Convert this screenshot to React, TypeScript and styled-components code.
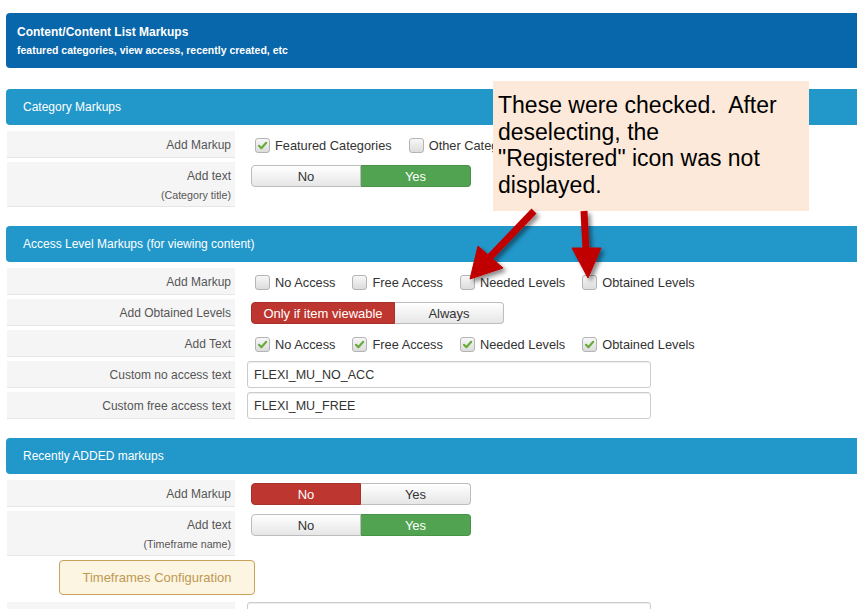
import styled, { createGlobalStyle } from "styled-components";

const GlobalStyle = createGlobalStyle`
  html, body {
    margin: 0;
    padding: 0;
    background: #fff;
    overflow: hidden;
  }
  body {
    font-family: "Liberation Sans", Arial, sans-serif;
  }
`;

type Tone = "red" | "green" | undefined;

function Check({ label, checked }: { label: string; checked?: boolean }) {
  return (
    <CheckItem>
      <Box>
        {checked && (
          <svg width="13" height="13" viewBox="0 0 13 13">
            <path
              d="M3 6.8 L5.4 9.2 L10.2 3.8"
              fill="none"
              stroke="#6aac3c"
              strokeWidth="2.2"
              strokeLinecap="round"
              strokeLinejoin="round"
            />
          </svg>
        )}
      </Box>
      {label}
    </CheckItem>
  );
}

function Switch({
  options,
}: {
  options: { text: string; tone?: Tone; width: number }[];
}) {
  return (
    <Toggle>
      {options.map((o) => (
        <ToggleSeg key={o.text} $tone={o.tone} $w={o.width}>
          {o.text}
        </ToggleSeg>
      ))}
    </Toggle>
  );
}

export default function App() {
  return (
    <Page>
      <GlobalStyle />
      <MainHeader>
        <MainTitle>Content/Content List Markups</MainTitle>
        <MainSub>featured categories, view access, recently created, etc</MainSub>
      </MainHeader>

      {/* Category */}
      <Section>
        <SectionHeader>Category Markups</SectionHeader>
        <Row>
          <Label>Add Markup</Label>
          <CheckList>
            <Check label="Featured Categories" checked />
            <Check label="Other Categories" />
          </CheckList>
        </Row>
        <Row>
          <Label>
            Add text
            <LabelNote>(Category title)</LabelNote>
          </Label>
          <Switch
            options={[
              { text: "No", width: 110 },
              { text: "Yes", tone: "green", width: 110 },
            ]}
          />
        </Row>
      </Section>

      {/* Access levels */}
      <Section>
        <SectionHeader>Access Level Markups (for viewing content)</SectionHeader>
        <Row>
          <Label>Add Markup</Label>
          <CheckList>
            <Check label="No Access" />
            <Check label="Free Access" />
            <Check label="Needed Levels" />
            <Check label="Obtained Levels" />
          </CheckList>
        </Row>
        <Row>
          <Label>Add Obtained Levels</Label>
          <Switch
            options={[
              { text: "Only if item viewable", tone: "red", width: 144 },
              { text: "Always", width: 109 },
            ]}
          />
        </Row>
        <Row>
          <Label>Add Text</Label>
          <CheckList>
            <Check label="No Access" checked />
            <Check label="Free Access" checked />
            <Check label="Needed Levels" checked />
            <Check label="Obtained Levels" checked />
          </CheckList>
        </Row>
        <Row>
          <Label>Custom no access text</Label>
          <TextInput defaultValue="FLEXI_MU_NO_ACC" />
        </Row>
        <Row>
          <Label>Custom free access text</Label>
          <TextInput defaultValue="FLEXI_MU_FREE" />
        </Row>
      </Section>

      {/* Recently added */}
      <Section>
        <SectionHeader>Recently ADDED markups</SectionHeader>
        <Row>
          <Label>Add Markup</Label>
          <Switch
            options={[
              { text: "No", tone: "red", width: 110 },
              { text: "Yes", width: 110 },
            ]}
          />
        </Row>
        <Row>
          <Label>
            Add text
            <LabelNote>(Timeframe name)</LabelNote>
          </Label>
          <Switch
            options={[
              { text: "No", width: 110 },
              { text: "Yes", tone: "green", width: 110 },
            ]}
          />
        </Row>
        <ConfigButton>Timeframes Configuration</ConfigButton>
        <Row>
          <Label />
          <TextInput defaultValue="" />
        </Row>
      </Section>

      <Callout>
        These were checked.{"  "}After
        <br />
        deselecting, the
        <br />
        "Registered" icon was not
        <br />
        displayed.
      </Callout>

      <ArrowLayer width="857" height="609" viewBox="0 0 857 609">
        <defs>
          <filter id="sh" x="-30%" y="-30%" width="160%" height="160%">
            <feDropShadow dx="3" dy="3" stdDeviation="2" floodColor="#000" floodOpacity="0.45" />
          </filter>
        </defs>
        <g filter="url(#sh)" fill="#c00000" stroke="#c00000">
          <line x1="534" y1="211" x2="490" y2="257" strokeWidth="7" />
          <polygon points="470,279 478,246 503,268" strokeWidth="1" />
          <line x1="584" y1="211" x2="586" y2="250" strokeWidth="7" />
          <polygon points="588,278 572,248 601,248" strokeWidth="1" />
        </g>
      </ArrowLayer>
    </Page>
  );
}

const Page = styled.div`
  position: relative;
  width: 900px;
  padding: 13px 0 0 6px;
  box-sizing: border-box;
`;

const MainHeader = styled.div`
  height: 55px;
  box-sizing: border-box;
  padding: 12px 11px;
  margin-bottom: 21px;
  background: #0866aa;
  color: #fff;
  border-radius: 4px 0 0 4px;
`;

const MainTitle = styled.div`
  font-size: 12px;
  font-weight: bold;
  line-height: 15px;
`;

const MainSub = styled.div`
  margin-top: 4px;
  font-size: 10.5px;
  font-weight: bold;
  line-height: 12px;
`;

const Section = styled.section`
  display: flow-root;
  margin-bottom: 15px;
`;

const SectionHeader = styled.div`
  height: 36px;
  line-height: 36px;
  padding-left: 17px;
  margin-bottom: 6px;
  background: #2297ca;
  color: #fff;
  font-size: 12px;
  border-radius: 4px 0 0 4px;
`;

const Row = styled.div`
  display: flex;
  align-items: flex-start;
  gap: 12px;
  margin-bottom: 4px;
`;

const Label = styled.div`
  width: 228px;
  min-height: 27px;
  margin-left: 1px;
  padding: 1px 4px 0 0;
  box-sizing: border-box;
  background: #f5f5f5;
  box-shadow: inset 0 -1px 0 #e6e6e6;
  color: #555;
  font-size: 12px;
  line-height: 26px;
  text-align: right;
`;

const LabelNote = styled.span`
  display: block;
  font-size: 10.7px;
  line-height: 13px;
  padding-bottom: 5px;
`;

const CheckList = styled.div`
  display: flex;
  align-items: center;
  gap: 17px;
  height: 27px;
  padding: 1px 0 0 8px;
  box-sizing: border-box;
`;

const CheckItem = styled.label`
  display: inline-flex;
  align-items: center;
  gap: 5px;
  color: #333;
  font-size: 12.8px;
`;

const Box = styled.span`
  display: inline-flex;
  align-items: center;
  justify-content: center;
  width: 15px;
  height: 15px;
  box-sizing: border-box;
  border: 1px solid #b4b4b4;
  border-radius: 3px;
  background: linear-gradient(#f7f7f7, #dcdcdc);
`;

const Toggle = styled.div`
  display: flex;
  margin: 3px 0 0 4px;
`;

const toneBg = (t: Tone) =>
  t === "red" ? "#bd362f" : t === "green" ? "#51a351" : "linear-gradient(#ffffff, #e6e6e6)";

const toneBorder = (t: Tone) =>
  t === "red" ? "#a8302a" : t === "green" ? "#479447" : "#bdbdbd";

const ToggleSeg = styled.div<{ $tone: Tone; $w: number }>`
  width: ${(p) => p.$w}px;
  height: 22px;
  box-sizing: border-box;
  border: 1px solid ${(p) => toneBorder(p.$tone)};
  background: ${(p) => toneBg(p.$tone)};
  color: ${(p) => (p.$tone ? "#fff" : "#333")};
  font-size: 13px;
  line-height: 21px;
  text-align: center;

  &:first-child {
    border-radius: 4px 0 0 4px;
  }
  &:last-child {
    border-radius: 0 4px 4px 0;
    border-left: none;
  }
`;

const TextInput = styled.input`
  width: 404px;
  height: 27px;
  box-sizing: border-box;
  padding: 0 6px;
  border: 1px solid #ccc;
  border-radius: 3px;
  box-shadow: inset 0 1px 1px rgba(0, 0, 0, 0.075);
  color: #333;
  font-family: "Liberation Sans", Arial, sans-serif;
  font-size: 12.5px;
  outline: none;
`;

const ConfigButton = styled.div`
  width: 196px;
  height: 35px;
  margin: 3px 0 7px 53px;
  box-sizing: border-box;
  border: 1px solid #c9a15b;
  border-radius: 4px;
  background: #fcf5e1;
  color: #c09853;
  font-size: 13px;
  line-height: 33px;
  text-align: center;
`;

const Callout = styled.div`
  position: absolute;
  left: 493px;
  top: 81px;
  width: 316px;
  height: 130px;
  box-sizing: border-box;
  padding: 11px 6px 0 5px;
  background: #fde9d9;
  color: #000;
  font-size: 23px;
  line-height: 26.7px;
  white-space: pre;
`;

const ArrowLayer = styled.svg`
  position: absolute;
  left: 0;
  top: 0;
  pointer-events: none;
`;
